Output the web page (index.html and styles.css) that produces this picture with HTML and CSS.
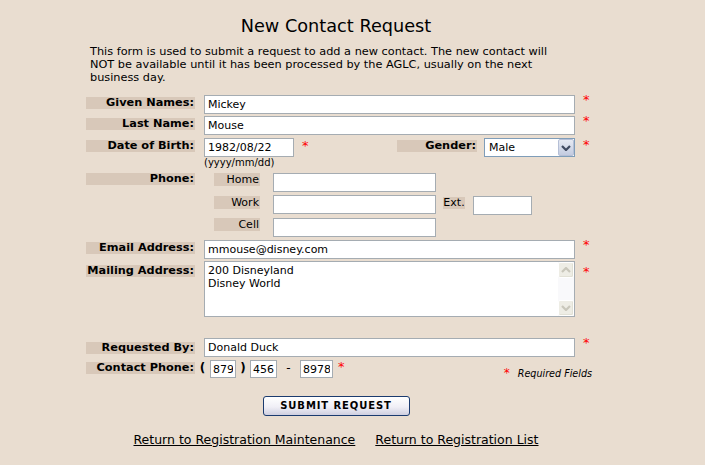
FILE: index.html
```html
<!DOCTYPE html>
<html>
<head>
<meta charset="utf-8">
<title>New Contact Request</title>
<link rel="stylesheet" href="styles.css">
</head>
<body>
<div class="page">
  <h1 class="title">New Contact Request</h1>
  <p class="intro">This form is used to submit a request to add a new contact. The new contact will NOT be available until it has been processed by the AGLC, usually on the next business day.</p>

  <form class="form">
    <div class="row">
      <span class="label">Given Names:</span>
      <input class="field wide" type="text" value="Mickey">
      <span class="req">*</span>
    </div>
    <div class="row tight">
      <span class="label">Last Name:</span>
      <input class="field wide" type="text" value="Mouse">
      <span class="req">*</span>
    </div>
    <div class="row">
      <span class="label">Date of Birth:</span>
      <div class="dob">
        <input class="field dob-input" type="text" value="1982/08/22">
        <span class="hint">(yyyy/mm/dd)</span>
      </div>
      <span class="req req-dob">*</span>
      <div class="gender">
        <span class="label label-gender">Gender:</span>
        <div class="select">
          <select class="select-input"><option>Male</option><option>Female</option></select>
          <span class="select-btn"><svg width="10" height="6" viewBox="0 0 10 6"><path d="M1 1 L5 5 L9 1" fill="none" stroke="#3f4a60" stroke-width="2.2"/></svg></span>
        </div>
        <span class="req req-gender">*</span>
      </div>
    </div>
    <div class="row phone">
      <span class="label label-phone">Phone:</span>
      <div class="phone-lines">
        <div class="sub">
          <span class="sublabel">Home</span>
          <input class="field phone-input" type="text">
        </div>
        <div class="sub">
          <span class="sublabel sublabel-work">Work</span>
          <input class="field phone-input" type="text">
          <span class="ext">Ext.</span>
          <input class="field ext-input" type="text">
        </div>
        <div class="sub">
          <span class="sublabel">Cell</span>
          <input class="field phone-input" type="text">
        </div>
      </div>
    </div>
    <div class="row">
      <span class="label">Email Address:</span>
      <input class="field wide" type="text" value="mmouse@disney.com">
      <span class="req">*</span>
    </div>
    <div class="row mailing">
      <span class="label label-mailing">Mailing Address:</span>
      <div class="ta-wrap">
        <textarea class="ta">200 Disneyland
Disney World</textarea>
        <div class="scrollbar">
          <span class="sb-btn"><svg width="10" height="6" viewBox="0 0 10 6"><path d="M1 5 L5 1 L9 5" fill="none" stroke="#c9c7bb" stroke-width="2.2"/></svg></span>
          <span class="sb-btn"><svg width="10" height="6" viewBox="0 0 10 6"><path d="M1 1 L5 5 L9 1" fill="none" stroke="#c9c7bb" stroke-width="2.2"/></svg></span>
        </div>
      </div>
      <span class="req req-mailing">*</span>
    </div>
    <div class="row requested">
      <span class="label label-requested">Requested By:</span>
      <input class="field wide" type="text" value="Donald Duck">
      <span class="req">*</span>
    </div>
    <div class="row contact">
      <span class="label label-contact">Contact Phone:</span>
      <span class="paren paren-open">(</span>
      <input class="field small area" type="text" value="879">
      <span class="paren paren-close">)</span>
      <input class="field small prefix" type="text" value="456">
      <span class="paren dash">-</span>
      <input class="field small line" type="text" value="8978">
      <span class="req req-contact">*</span>
      <span class="required"><span class="required-star">*</span>Required Fields</span>
    </div>
  </form>

  <div class="actions">
    <button class="submit" type="button">SUBMIT REQUEST</button>
  </div>

  <div class="links">
    <a href="#">Return to Registration Maintenance</a>
    <a href="#">Return to Registration List</a>
  </div>
</div>
</body>
</html>
```

FILE: styles.css
```css
body {
  margin: 0;
  background: #e9ddd0;
  color: #000;
  font-family: "DejaVu Sans", Verdana, sans-serif;
}

.page {
  width: 672px;
}

.title {
  margin: 15px 0 0;
  font-size: 17.7px;
  font-weight: normal;
  line-height: 22px;
  text-align: center;
}

.intro {
  margin: 8px 0 0 90px;
  width: 470px;
  font-size: 11.3px;
  line-height: 13px;
}

.form {
  margin: 11px 0 0 86px;
  width: 510px;
  display: flex;
  flex-direction: column;
}

.row {
  display: flex;
  align-items: flex-start;
}

.row + .row {
  margin-top: 3px;
}

.row.tight {
  margin-top: 2px;
}

.label {
  flex: none;
  box-sizing: border-box;
  width: 109px;
  height: 12px;
  margin-top: 2px;
  margin-right: 9px;
  padding-right: 1px;
  background: #d8c8b9;
  font-size: 11.3px;
  font-weight: bold;
  line-height: 12px;
  text-align: right;
  white-space: nowrap;
}

.field {
  box-sizing: border-box;
  height: 19px;
  margin: 0;
  padding: 0 3px;
  border: 1px solid #a5acb2;
  background: #fff;
  color: #000;
  font-family: "DejaVu Sans", Verdana, sans-serif;
  font-size: 11px;
  outline: none;
}

.wide {
  width: 371px;
}

.req {
  flex: none;
  width: 13px;
  margin-left: 8px;
  margin-top: -2px;
  color: #f00;
  font-size: 13px;
  line-height: 13px;
}

/* Date of birth / gender */
.dob {
  display: flex;
  flex-direction: column;
}

.dob-input {
  width: 90px;
}

.hint {
  font-size: 10px;
  line-height: 11px;
}

.req-dob {
  margin-top: 1px;
}

.gender {
  display: flex;
  align-items: flex-start;
  margin-left: auto;
}

.label-gender {
  width: 80px;
  margin-right: 7px;
}

.select {
  position: relative;
  box-sizing: border-box;
  width: 91px;
  height: 19px;
  border: 1px solid #7f9db9;
  background: #fff;
}

.select-input {
  appearance: none;
  -webkit-appearance: none;
  display: block;
  width: 100%;
  height: 100%;
  margin: 0;
  padding: 0 0 0 4px;
  border: none;
  background: transparent;
  font-family: "DejaVu Sans", Verdana, sans-serif;
  font-size: 11px;
  color: #000;
  outline: none;
}

.select-btn {
  position: absolute;
  top: 0;
  right: 0;
  box-sizing: border-box;
  width: 16px;
  height: 17px;
  display: flex;
  align-items: center;
  justify-content: center;
  border: 1px solid #b5bfd6;
  border-radius: 2px;
  background: linear-gradient(#e6eaf3, #c3cbe0);
  pointer-events: none;
}

.req-gender {
  margin-top: 0;
}

/* Phone */
.row.phone {
  margin-top: 5px;
}

.label-phone {
  margin-top: 0;
}

.phone-lines {
  display: flex;
  flex-direction: column;
  gap: 3px;
}

.sub {
  display: flex;
  align-items: flex-start;
}

.sublabel {
  box-sizing: border-box;
  width: 46px;
  height: 13px;
  margin-left: 10px;
  margin-right: 13px;
  padding-right: 1px;
  background: #d8c8b9;
  font-size: 11px;
  line-height: 13px;
  text-align: right;
}

.sublabel-work {
  margin-top: 1px;
}

.phone-input {
  width: 163px;
}

.ext {
  width: 22px;
  height: 12px;
  margin: 2px 8px 0 7px;
  background: #d8c8b9;
  font-size: 11px;
  line-height: 12px;
  text-align: center;
  white-space: nowrap;
}

.ext-input {
  width: 59px;
  margin-top: 1px;
}

/* Mailing */
.row.mailing {
  margin-top: 2px;
}

.label-mailing {
  margin-top: 4px;
}

.ta-wrap {
  position: relative;
  width: 371px;
  height: 56px;
}

.ta {
  box-sizing: border-box;
  display: block;
  width: 100%;
  height: 100%;
  margin: 0;
  padding: 2px 3px;
  border: 1px solid #a5acb2;
  background: #fff;
  font-family: "DejaVu Sans", Verdana, sans-serif;
  font-size: 11px;
  line-height: 13px;
  resize: none;
  overflow: hidden;
  outline: none;
}

.scrollbar {
  position: absolute;
  top: 1px;
  right: 1px;
  bottom: 1px;
  width: 16px;
  display: flex;
  flex-direction: column;
  justify-content: space-between;
  background: #f9f9fb;
}

.sb-btn {
  box-sizing: border-box;
  width: 16px;
  height: 16px;
  display: flex;
  align-items: center;
  justify-content: center;
  border: 1px solid #fff;
  border-radius: 2px;
  background: #eeede5;
  box-shadow: inset -1px -1px 0 #e2e1d6;
}

.req-mailing {
  margin-top: 4px;
}

/* Requested / contact */
.row.requested {
  margin-top: 21px;
}

.label-requested {
  margin-top: 4px;
}

.row.contact {
  margin-top: 3px;
}

.label-contact {
  margin-top: 2px;
  margin-right: 0;
  width: 109px;
}

.paren {
  flex: none;
  font-size: 12px;
  font-weight: bold;
  line-height: 16px;
  text-align: center;
}

.paren-open {
  width: 15px;
}

.paren-close {
  width: 14px;
}

.dash {
  width: 23px;
  font-weight: normal;
}

.small {
  height: 18px;
  padding: 0 2px;
}

.area {
  width: 26px;
}

.prefix {
  width: 27px;
}

.line {
  width: 33px;
}

.req-contact {
  margin-left: 5px;
  margin-top: 0;
}

.required {
  align-self: flex-end;
  margin-left: auto;
  margin-right: 4px;
  margin-bottom: -1.5px;
  font-size: 9.6px;
  font-style: italic;
  white-space: nowrap;
}

.required-star {
  margin-right: 8px;
  color: #f00;
  font-size: 12px;
  font-style: normal;
}

/* Actions */
.actions {
  margin-top: 16px;
  text-align: center;
}

.submit {
  box-sizing: border-box;
  width: 147px;
  height: 20px;
  margin: 0;
  padding: 0;
  border: 1px solid #1b3b6f;
  border-radius: 3px;
  background: linear-gradient(#ffffff, #f0eff6 55%, #cfcfe0);
  color: #000;
  font-family: "DejaVu Sans", Verdana, sans-serif;
  font-size: 10px;
  font-weight: bold;
  letter-spacing: 0.9px;
}

.links {
  display: flex;
  justify-content: center;
  gap: 20px;
  margin-top: 16px;
  font-size: 12.5px;
  line-height: 15px;
}

.links a {
  color: #000;
  text-decoration: underline;
}
```
